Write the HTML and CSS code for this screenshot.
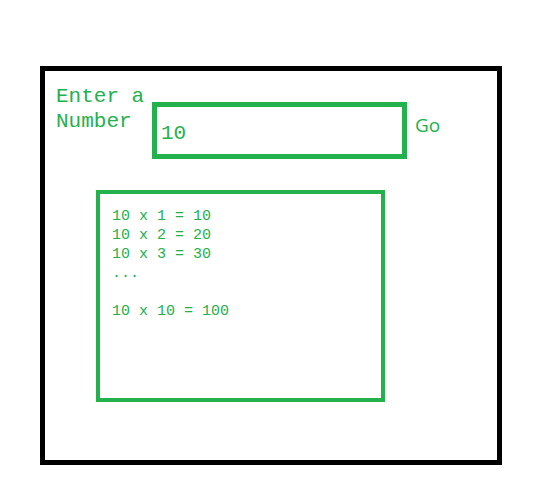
FILE: index.html
```html
<!DOCTYPE html>
<html>
<head>
<meta charset="utf-8">
<link rel="stylesheet" href="styles.css">
</head>
<body>
<div class="page">
  <div class="frame">
    <div class="top-row">
      <label class="label" for="num">Enter a Number</label>
      <input class="num-input" id="num" type="text" value="10">
      <span class="go">Go</span>
    </div>
    <pre class="output">10 x 1 = 10
10 x 2 = 20
10 x 3 = 30
...

10 x 10 = 100</pre>
  </div>
</div>
</body>
</html>
```
FILE: styles.css
```css
html, body {
  margin: 0;
  padding: 0;
  background: #ffffff;
}

.page {
  padding: 66px 0 0 40px;
}

.frame {
  box-sizing: border-box;
  width: 462px;
  height: 399px;
  border: 5px solid #000000;
}

.top-row {
  display: flex;
  align-items: flex-start;
}

.label {
  width: 90px;
  margin: 13px 6px 0 11px;
  font-family: "Liberation Mono", monospace;
  font-size: 21px;
  line-height: 25px;
  color: #22b14c;
}

.num-input {
  box-sizing: border-box;
  width: 255px;
  height: 57px;
  margin: 31px 0 0 0;
  padding: 6px 4px 0 4px;
  border: 5px solid #22b14c;
  border-radius: 0;
  outline: none;
  background: #ffffff;
  font-family: "Liberation Mono", monospace;
  font-size: 21px;
  color: #22b14c;
}

.go {
  margin: 41px 0 0 8px;
  font-family: "Open Sans", sans-serif;
  font-size: 19px;
  color: #22b14c;
}

.output {
  box-sizing: border-box;
  width: 289px;
  height: 212px;
  margin: 31px 0 0 51px;
  padding: 13px 11px 0 12px;
  border: 4px solid #22b14c;
  font-family: "Liberation Mono", monospace;
  font-size: 15px;
  line-height: 19px;
  color: #22b14c;
}
```
